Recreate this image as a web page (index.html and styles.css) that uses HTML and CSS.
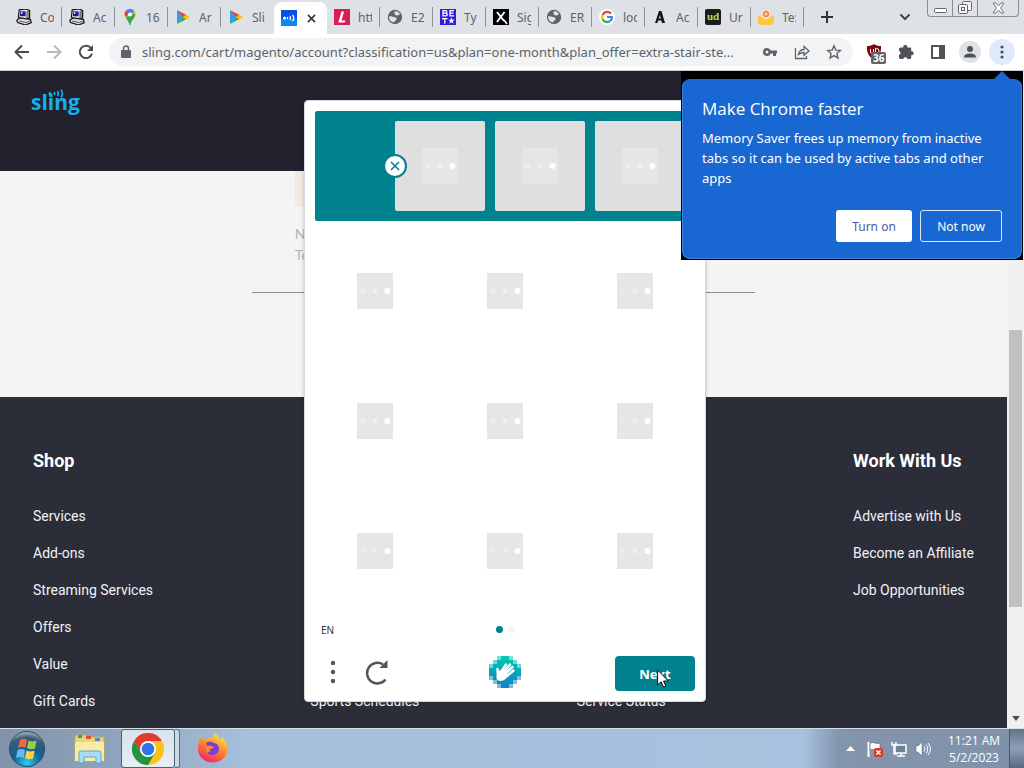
FILE: index.html
```html
<!DOCTYPE html>
<html lang="en">
<head>
<meta charset="utf-8">
<title>Sling</title>
<link rel="stylesheet" href="styles.css">
</head>
<body>
<svg class="defs" width="0" height="0" aria-hidden="true">
  <defs>
    <symbol id="pc" viewBox="0 0 20 20">
      <path d="M4 1l9-1 4 2v9l-3 2H6l-3-3z" fill="#e4e4e4" stroke="#111" stroke-width="1.500"/>
      <path d="M5 3h7v6H5z" fill="#1a1a9a"/><path d="M6 4h2v2H6z" fill="#fff"/>
      <path d="M13 3l3-1v9l-3 1z" fill="#777"/>
      <path d="M1 14l4-3 13 2 1 4-7 3-10-3z" fill="#ddd" stroke="#111" stroke-width="1.500"/>
      <path d="M4 15l9 2 4-2" stroke="#333" fill="none"/>
    </symbol>
    <symbol id="play" viewBox="0 0 16 16">
      <path d="M2 1l6 7-6 7z" fill="#2a9df4"/>
      <path d="M2 1l9.500 5L8 8.500 2 1z" fill="#ea4335"/><path d="M2 15l9.500-5L8 8z" fill="#34a853"/>
      <path d="M11 5.500L15 8l-4 2.500L8 8z" fill="#fbbc04"/>
    </symbol>
    <symbol id="globe" viewBox="0 0 16 16">
      <circle cx="8" cy="8" r="7.200" fill="#5f6368"/>
      <path d="M7.500 2.500c2-1 5 .5 5.500 3-1.500 0-2 1.500-3.500 1S7 5 7.500 2.500zM2 7.500c2-.5 3 .5 5 .5s3 1 2.500 2.500-2 1-2.500 3C4 13 2 11 2 7.500z" fill="#dfe1e5"/>
    </symbol>
    <symbol id="tile" viewBox="0 0 36 36">
      <rect width="36" height="36" fill="#e6e6e6"/>
      <circle cx="6" cy="18" r="2.500" fill="#ededed"/><circle cx="18" cy="18" r="2.500" fill="#efefef"/><circle cx="30.500" cy="18" r="3" fill="#fff"/>
    </symbol>
  </defs>
</svg>

<header class="tabstrip">
  <nav class="tabs" aria-label="Tabs">
    <button class="tab"><svg class="fav"><use href="#pc"/></svg><span>Co</span></button>
    <button class="tab"><svg class="fav"><use href="#pc"/></svg><span>Ac</span></button>
    <button class="tab"><svg class="fav" viewBox="0 0 16 16"><path d="M8 0a5.500 5.500 0 0 0-4.500 2L8 6z" fill="#4285f4"/><path d="M3.500 2C2 4 2.500 6.500 3.500 8L8 5z" fill="#ea4335"/><path d="M3.500 8L8 5l4-3.500C14 4 13.600 7 12 9l-2 3z" fill="#fbbc04"/><path d="M13.200 4c.6 5-4 6-4.700 12h-1C7 13 5 11 3.500 8L8 7z" fill="#34a853"/><path d="M8 0c2 0 3.500.7 4.500 2L8 6z" fill="#4285f4"/><circle cx="8" cy="5.500" r="2" fill="#fff"/></svg><span>16</span></button>
    <button class="tab"><svg class="fav"><use href="#play"/></svg><span>Ar</span></button>
    <button class="tab last"><svg class="fav"><use href="#play"/></svg><span>Sli</span></button>
    <button class="tab active" aria-label="Sling"><svg class="fav" viewBox="0 0 16 16"><rect width="16" height="16" fill="#0a4fe8"/><path d="M0 9h16v7H0z" fill="#0a8bf2"/><circle cx="3.500" cy="8" r="1.500" fill="#fff"/><path d="M6.500 7v2M9 6.200q1 1.800 0 3.600M11.500 5q2.500 3 0 6" stroke="#fff" stroke-width="1.400" fill="none"/></svg><svg class="close" viewBox="0 0 10 10"><path d="M1 1l8 8M9 1L1 9" stroke="#333" stroke-width="1.700"/></svg></button>
    <button class="tab"><svg class="fav" viewBox="0 0 16 16"><rect width="16" height="16" fill="#d81e56"/><path d="M7.500 2.500h2.600L7.500 11.500h4l-.8 2H4.300z" fill="#fff"/></svg><span>htt</span></button>
    <button class="tab"><svg class="fav"><use href="#globe"/></svg><span>E2</span></button>
    <button class="tab"><svg class="fav" viewBox="0 0 16 16"><rect width="16" height="16" fill="#2b1fe0"/><path d="M3 1.700h2.500q1.300 0 1.300 1.200T5.500 4.200H3zM3 4.200h3q1.200 0 1.200 1.300T6 6.800H3zM9.500 1.700h4.500M9.500 4.200h4M9.500 6.800h4.500M10 1v6M2 9.700h5.500M4.800 9.700v5" stroke="#fff" stroke-width="1.300" fill="none"/><path d="M11.500 8.500l.9 2.300h2.300l-1.900 1.400.8 2.500-2.100-1.500-2.100 1.500.8-2.500-1.900-1.400h2.300z" fill="#fff"/></svg><span>Ty</span></button>
    <button class="tab"><svg class="fav" viewBox="0 0 16 16"><rect width="16" height="16" fill="#000"/><path d="M4 3l7 9M11.500 3L4 13" stroke="#fff" stroke-width="2"/><path d="M11 11l3 4" stroke="#fff" stroke-width="1.500"/></svg><span>Sig</span></button>
    <button class="tab"><svg class="fav"><use href="#globe"/></svg><span>ER</span></button>
    <button class="tab"><svg class="fav" viewBox="0 0 16 16"><circle cx="8" cy="8" r="8" fill="#fff"/><g fill="none" stroke-width="2.200"><path d="M12 4.500A5 5 0 0 0 3.600 6" stroke="#ea4335"/><path d="M3.600 6a5 5 0 0 0 0 4.200" stroke="#fbbc04"/><path d="M3.600 10.200a5 5 0 0 0 7.700 1.700" stroke="#34a853"/><path d="M11.300 11.900A5 5 0 0 0 13 8H8" stroke="#4285f4"/></g></svg><span>loc</span></button>
    <button class="tab"><svg class="fav" viewBox="0 0 16 16"><path d="M7 2h2.500L13 14h-3l-.7-2.500H6L5.500 14H3zM8 6l-1.200 3.600h2z" fill="#151515" fill-rule="evenodd"/></svg><span>Ac</span></button>
    <button class="tab"><span class="fav ud">ud</span><span>Ur</span></button>
    <button class="tab"><svg class="fav" viewBox="0 0 16 16"><path d="M3 1h10v9H3z" fill="#fbd9c0"/><circle cx="8" cy="5" r="2.300" fill="none" stroke="#e0703c" stroke-width="1.300"/><path d="M0 6l8 5 8-5v8l-2 2H2l-2-2z" fill="#fbc93d"/></svg><span>Te:</span></button>
  </nav>
  <button class="newtab" aria-label="New tab"><svg width="12" height="12" viewBox="0 0 12 12"><path d="M6 0v12M0 6h12" stroke="#333" stroke-width="2"/></svg></button>
  <button class="chev" aria-label="Search tabs"><svg width="12" height="8" viewBox="0 0 12 8"><path d="M1.500 1.500L6 6l4.500-4.500" stroke="#444" stroke-width="2" fill="none"/></svg></button>
  <div class="winctl">
    <button aria-label="Minimize"><svg width="13" height="6" viewBox="0 0 13 6"><rect x=".5" y=".5" width="12" height="4" rx="1" fill="#fff" stroke="#666"/></svg></button>
    <button aria-label="Restore"><svg width="14" height="14" viewBox="0 0 14 14"><g fill="#f4f4f4" stroke="#666"><rect x="4.500" y=".5" width="9" height="9" rx="1"/><rect x=".5" y="3.500" width="9" height="9" rx="1"/><rect x="3.500" y="6.500" width="3" height="3"/></g></svg></button>
    <button aria-label="Close"><svg width="13" height="12" viewBox="0 0 13 12"><path d="M1 1h3l2.500 3L9 1h3L8.500 6 12 11H9L6.500 8 4 11H1l3.500-5z" fill="#fff" stroke="#777"/></svg></button>
  </div>
</header>

<div class="toolbar">
  <div class="navbtns">
    <button aria-label="Back"><svg width="16" height="16" viewBox="0 0 16 16"><path d="M15 8H2M8 1.500L1.500 8 8 14.500" stroke="#494c50" stroke-width="2" fill="none"/></svg></button>
    <button aria-label="Forward"><svg width="16" height="16" viewBox="0 0 16 16"><path d="M1 8h13M8 1.500L14.500 8 8 14.500" stroke="#b9bbbe" stroke-width="2" fill="none"/></svg></button>
    <button aria-label="Reload"><svg width="16" height="16" viewBox="0 0 16 16"><path d="M13 4.200A6.200 6.200 0 1 0 14 9.500" stroke="#494c50" stroke-width="2" fill="none"/><path d="M15 1v6H9z" fill="#494c50"/></svg></button>
  </div>
  <div class="omnibox">
    <svg width="10" height="14" viewBox="0 0 10 14"><rect y="5" width="10" height="8" rx="1" fill="#5f6368"/><path d="M2.500 6V3.500a2.500 2.500 0 0 1 5 0V6" stroke="#5f6368" stroke-width="1.500" fill="none"/></svg>
    <input class="url" aria-label="Address" value="sling.com/cart/magento/account?classification=us&amp;plan=one-month&amp;plan_offer=extra-stair-ste...">
    <button aria-label="Passwords"><svg width="16" height="16" viewBox="0 0 16 16"><path d="M5 4a4 4 0 1 0 3.700 5.500H11V12h3V9.500h1v-3H8.700A4 4 0 0 0 5 4zm0 2.500a1.500 1.500 0 1 1 0 3 1.500 1.500 0 0 1 0-3z" fill="#5f6368" fill-rule="evenodd"/></svg></button>
    <button aria-label="Share"><svg width="16" height="16" viewBox="0 0 16 16"><path d="M1.500 4v10.500h11V12M4.500 10.500c.5-3.500 2.500-5 5.500-5V2.500L15 7l-5 4.300V8.500c-2.500 0-4 .5-5.500 2z" stroke="#5f6368" stroke-width="1.300" fill="none"/></svg></button>
    <button aria-label="Bookmark"><svg width="16" height="16" viewBox="0 0 16 16"><path d="M8 1.800l1.800 4.300 4.600.4-3.500 3 1 4.500L8 11.600 4.100 14l1-4.500-3.500-3 4.600-.4z" stroke="#5f6368" stroke-width="1.400" fill="none"/></svg></button>
  </div>
  <div class="exts">
    <button class="ublock" aria-label="uBlock"><svg width="16" height="16" viewBox="0 0 16 16"><path d="M8 0c2 1.500 4 2 7 2 .3 6-1 10-7 14C2 12 .7 8 1 2c3 0 5-.5 7-2z" fill="#800610"/><path d="M4.500 5v3q0 1.500 1.500 1.500T7.500 8V5M9.500 9.500v-5h1a2 2 0 0 1 0 5z" stroke="#fff" fill="none"/></svg><span class="badge">36</span></button>
    <button aria-label="Extensions"><svg width="16" height="16" viewBox="0 0 16 16"><path d="M1 5q0-1.500 1.500-1.500H5.300a2 2 0 1 1 3.900 0H12q1.200 0 1.200 1.300v2.500a2 2 0 1 1 0 3.900v2.600q0 1.200-1.200 1.200H9.500a2.200 2.200 0 0 0-4.300 0H2.500Q1 15 1 13.600V11a2.200 2.200 0 0 0 0-4.200z" fill="#4f5256"/></svg></button>
    <button aria-label="Side panel"><svg width="16" height="16" viewBox="0 0 16 16"><rect x="2" y="2" width="12" height="12" fill="none" stroke="#4f5256" stroke-width="2"/><rect x="9" y="2" width="5" height="12" fill="#4f5256"/></svg></button>
    <button class="round avatar" aria-label="Profile"><svg width="14" height="14" viewBox="0 0 14 14"><circle cx="7" cy="4" r="3" fill="#4a5060"/><path d="M1 12.500q0-4 6-4t6 4z" fill="#4a5060"/></svg></button>
    <button class="round menu" aria-label="Menu"><svg width="4" height="14" viewBox="0 0 4 14"><g fill="#41506a"><circle cx="2" cy="2" r="1.600"/><circle cx="2" cy="7" r="1.600"/><circle cx="2" cy="12" r="1.600"/></g></svg></button>
  </div>
</div>

<div class="viewport">
  <div class="page">
    <div class="sitehead">
      <a class="logo" href="#" aria-label="sling">sling<svg class="waves" width="18" height="9" viewBox="0 0 18 9"><circle cx="3" cy="4.500" r="1.500"/><path d="M7.500 3v3M10.500 2q1.500 2.500 0 5M14 .8q3 3.700 0 7.400" fill="none" stroke="#17aef0" stroke-width="1.600"/></svg></a>
    </div>
    <main class="content">
      <section class="notice">
        <div class="blush"></div>
        <p>N<br>Te</p>
      </section>
    </main>
    <footer class="foot">
      <div class="col">
        <h2>Shop</h2>
        <a href="#">Services</a><a href="#">Add-ons</a><a href="#">Streaming Services</a><a href="#">Offers</a><a href="#">Value</a><a href="#">Gift Cards</a>
      </div>
      <div class="col end"><a href="#">Sports Schedules</a></div>
      <div class="col end"><a href="#">Service Status</a></div>
      <div class="col">
        <h2>Work With Us</h2>
        <a href="#">Advertise with Us</a><a href="#">Become an Affiliate</a><a href="#">Job Opportunities</a>
      </div>
    </footer>
    <div class="overlay">
      <div class="captcha" role="dialog" aria-label="Challenge">
        <div class="prompt">
          <div class="sample"><svg class="dots"><use href="#tile"/></svg>
            <button class="dismiss" aria-label="Dismiss"><svg width="10" height="10" viewBox="0 0 10 10"><path d="M1 1l8 8M9 1L1 9" stroke="#00838f" stroke-width="1.600"/></svg></button>
          </div>
          <div class="sample"><svg class="dots"><use href="#tile"/></svg></div>
          <div class="sample"><svg class="dots"><use href="#tile"/></svg></div>
        </div>
        <div class="grid">
          <button aria-label="Image 1"><svg><use href="#tile"/></svg></button>
          <button aria-label="Image 2"><svg><use href="#tile"/></svg></button>
          <button aria-label="Image 3"><svg><use href="#tile"/></svg></button>
          <button aria-label="Image 4"><svg><use href="#tile"/></svg></button>
          <button aria-label="Image 5"><svg><use href="#tile"/></svg></button>
          <button aria-label="Image 6"><svg><use href="#tile"/></svg></button>
          <button aria-label="Image 7"><svg><use href="#tile"/></svg></button>
          <button aria-label="Image 8"><svg><use href="#tile"/></svg></button>
          <button aria-label="Image 9"><svg><use href="#tile"/></svg></button>
        </div>
        <div class="status"><button class="lang">EN</button><div class="crumbs"><i class="on"></i><i></i></div><span></span></div>
        <div class="actions">
          <div class="tools">
            <button aria-label="More"><svg width="6" height="24" viewBox="0 0 6 24"><g fill="#555"><circle cx="3" cy="3" r="2.200"/><circle cx="3" cy="12" r="2.200"/><circle cx="3" cy="21" r="2.200"/></g></svg></button>
            <button aria-label="Refresh"><svg width="24" height="26" viewBox="0 0 24 26"><path d="M18 5.500A10.300 10.300 0 1 0 20.500 20.500" fill="none" stroke="#555" stroke-width="2.500"/><path d="M22.500 1v8H14.500z" fill="#555"/></svg></button>
          </div>
          <svg width="32" height="32" viewBox="0 0 32 32">
            <defs><linearGradient id="hg" x1="0" y1="0" x2="0" y2="1"><stop offset="0" stop-color="#00ccb0"/><stop offset=".5" stop-color="#04a3b8"/><stop offset="1" stop-color="#1880c8"/></linearGradient></defs>
            <path d="M8 0h16v4h4v4h4v16h-4v4h-4v4H8v-4H4v-4H0V8h4V4h4z" fill="url(#hg)"/>
            <g fill="#fff" fill-opacity=".45"><path d="M8 0h4v4H8zM20 0h4v4h-4zM4 4h4v4H4zM24 4h4v4h-4zM0 8h4v4H0zM28 8h4v4h-4zM0 20h4v4H0zM28 20h4v4h-4zM4 24h4v4H4zM24 24h4v4h-4zM8 28h4v4H8zM20 28h4v4h-4z"/></g>
            <g stroke="#fff" stroke-width="2.500" stroke-linecap="round" fill="none"><path d="M12 16l5-7.500M14 17l7-8.500M16 18l7.500-7M18 20l6.500-5.500M9 20l-.5-7"/></g>
            <path d="M8 18l3-4 3 1 4 2 1 3q-3 4.500-7 5-5 0-4.500-4z" fill="#fff"/>
          </svg>
          <button class="next">Next</button>
        </div>
        <svg class="cursor" width="12" height="19" viewBox="0 0 12 19"><path d="M.6 1v15l3.500-3.300L6.500 18l2.300-1-2.300-5h4.800z" fill="#fff" stroke="#111"/></svg>
      </div>
    </div>
  </div>
  <div class="scroll"><div class="thumb"></div><svg width="8" height="5" viewBox="0 0 8 5"><path d="M0 0h8L4 5z" fill="#505050"/></svg></div>
  <aside class="promo">
    <div class="bubble">
      <h1>Make Chrome faster</h1>
      <p>Memory Saver frees up memory from inactive tabs so it can be used by active tabs and other apps</p>
      <div class="choices"><button class="yes">Turn on</button><button class="no">Not now</button></div>
    </div>
  </aside>
</div>

<div class="taskbar">
  <button class="orb" aria-label="Start"><svg width="38" height="38" viewBox="0 0 38 38"><defs><radialGradient id="og" cx=".5" cy=".9" r=".9"><stop offset="0" stop-color="#25d0f5"/><stop offset=".45" stop-color="#14608f"/><stop offset=".8" stop-color="#3c5a76"/><stop offset="1" stop-color="#a9bccb"/></radialGradient></defs><circle cx="19" cy="19" r="17.500" fill="url(#og)" stroke="#2b4866"/><path d="M12 10q4-2.500 7 0l-1.500 8q-3-2-7.500 0z" fill="#ee6a3a"/><path d="M20.500 10.500q3.500 2 8 0l-1.500 8q-4 1.500-8-.3z" fill="#9bcf47"/><path d="M9.500 20q4.500-2 7.500 0l-1.500 8q-3-2-7.500 0z" fill="#6bb8ee"/><path d="M18.600 20.500q3.500 2 8 0l-1.500 8q-4 1.500-8-.3z" fill="#fbd24a"/></svg></button>
  <button class="app explorer" aria-label="Explorer"><svg width="34" height="32" viewBox="0 0 34 32"><path d="M2 4q0-2 2-2h8l2 2h17v24H2z" fill="#e9d27c" stroke="#c8ac52"/><path d="M5 2h4v3H5z" fill="#3aa34a"/><path d="M13 3h5v3h-5z" fill="#d8532e"/><path d="M22 5h5v3h-5z" fill="#4b8fd0"/><path d="M2 9h29v19H2z" fill="#f8eba8"/><path d="M6 30V20q0-2 2-2h18q2 0 2 2v10h-5v-6H11v6z" fill="#a9dcf3" stroke="#5ba7cf"/></svg></button>
  <button class="app chrome" aria-label="Chrome"><svg width="32" height="32" viewBox="0 0 32 32"><circle cx="16" cy="16" r="16" fill="#fbc116"/><path d="M2.140 8A16 16 0 0 1 29.860 8H16L9 20z" fill="#e33b2e"/><path d="M2.140 8A16 16 0 0 0 16 32L23 20 16 22 9 20z" fill="#229342"/><circle cx="16" cy="16" r="8" fill="#fff"/><circle cx="16" cy="16" r="6.300" fill="#2f74e8"/></svg></button>
  <div class="stack"></div>
  <button class="app firefox" aria-label="Firefox"><svg width="32" height="32" viewBox="0 0 32 32"><defs><linearGradient id="fg" x1=".8" y1="0" x2=".3" y2="1"><stop offset="0" stop-color="#fff04a"/><stop offset=".45" stop-color="#ff9328"/><stop offset="1" stop-color="#f0246a"/></linearGradient></defs><path d="M18 0q4 3 5 7l2-3q6 7 5.500 14A15 14 0 0 1 1 18Q0 10 5 3q1 3 3 4 4-3 8-2 0-3 2-5z" fill="url(#fg)"/><path d="M9 10q4-3 8 0 5 1 5 6a6.500 6.500 0 0 1-12 3q2 1 4-1-3-2-5-8z" fill="#7440d8"/><path d="M9 13q4-1 8 1-1 2-4 2-2 1-2 4-3-2-2-7z" fill="#ff8b2d"/></svg></button>
  <div class="tray">
    <svg width="9" height="5" viewBox="0 0 9 5"><path d="M4.500 0L9 5H0z" fill="#fff"/></svg>
    <svg width="16" height="16" viewBox="0 0 16 16"><path d="M1.500 1v15" stroke="#fff" stroke-width="2"/><path d="M3 2q3-1 5 0t5 0v7q-3 1-5 0t-5 0z" fill="#fff" stroke="#555" stroke-width=".6"/><rect x="7" y="7" width="9" height="9" rx="2" fill="#d8392b"/><path d="M9.500 9.500l4 4M13.500 9.500l-4 4" stroke="#fff" stroke-width="1.600"/></svg>
    <svg width="16" height="16" viewBox="0 0 16 16"><rect x="4" y="4" width="11" height="8" fill="#6f8195" stroke="#fff" stroke-width="1.500"/><path d="M6 15h8M10 12v3M1 1v3h4V1M3 4v9h3" stroke="#fff" stroke-width="1.500" fill="none"/></svg>
    <svg width="16" height="16" viewBox="0 0 16 16"><path d="M1 5h2l4-4v14l-4-4H1z" fill="#fff" stroke="#667" stroke-width=".5"/><path d="M9 5.500q2 2.500 0 5M11 3.500q3.500 4.500 0 9M13 2q5 6 0 12" stroke="#fff" fill="none"/></svg>
    <div class="clock">11:21 AM<br>5/2/2023</div>
  </div>
  <button class="peek" aria-label="Show desktop"></button>
</div>
</body>
</html>
```

FILE: styles.css
```css
* { box-sizing: border-box; }
body {
  margin: 0;
  height: 100vh;
  display: flex;
  flex-direction: column;
  overflow: hidden;
  font-family: "Noto Sans", "Open Sans", sans-serif;
}
button { border: 0; padding: 0; margin: 0; background: none; font: inherit; color: inherit; }
svg { display: block; flex: none; }
.defs { position: absolute; }

/* Tab strip */
.tabstrip { display: flex; align-items: center; height: 34px; padding-left: 9px; background: #dee1e6; flex: none; }
.tabs { display: flex; align-self: stretch; align-items: center; }
.tab { width: 53px; height: 20px; padding-left: 7px; display: flex; align-items: center; gap: 8px; border-right: 1px solid #8f9297; font-size: 12px; color: #5f6368; }
.tab span:last-child { width: 14px; overflow: hidden; text-align: left; white-space: nowrap; }
.tab.last { border-color: transparent; }
.tab.active { height: 32px; align-self: flex-end; gap: 10px; border: 0; border-radius: 8px 8px 0 0; background: #fff; }
.fav { width: 16px; height: 16px; flex: none; }
.ud { border-radius: 2px; background: #1b1c1b; color: #b6e05a; font: bold 11px/15px "Liberation Serif", serif; text-align: center; }
.close { width: 9px; height: 9px; }
.newtab { margin-left: 17px; }
.chev { margin-left: auto; }
.winctl { display: flex; align-self: flex-start; height: 17px; margin: 0 5px 0 16px; border: 1px solid #8a8d92; border-top: 0; border-radius: 0 0 4px 4px; }
.winctl button { width: 25px; display: flex; align-items: center; justify-content: center; border-right: 1px solid #8a8d92; }
.winctl button:first-child { align-items: flex-end; padding-bottom: 2px; }
.winctl button:last-child { width: 40px; border: 0; }

/* Toolbar */
.toolbar { display: flex; align-items: center; height: 37px; padding: 0 14px; background: #fff; border-bottom: 1px solid #c9cccf; flex: none; }
.navbtns { display: flex; gap: 16px; }
.omnibox { flex: 1; height: 28px; margin: 0 13px 0 15px; padding: 0 11px 0 12px; display: flex; align-items: center; gap: 16px; border-radius: 14px; background: #f1f3f4; }
.url { flex: 1; min-width: 0; margin-left: -5px; padding: 0; border: 0; outline: 0; font: 13px/20px "Noto Sans", sans-serif; color: #5f6368; background: #f1f3f4; }
.exts { display: flex; align-items: center; gap: 16px; }
.ublock { position: relative; }
.badge { position: absolute; left: 5px; top: 8px; padding: 0 2px; border-radius: 2px; background: #5f6368; color: #fff; font: bold 10px/12px "Open Sans", sans-serif; }
.round { display: flex; align-items: center; justify-content: center; border-radius: 50%; }
.avatar { width: 22px; height: 22px; margin: 0 -3px; background: #dfe1e5; }
.menu { width: 26px; height: 26px; margin: 0 -5px; background: #dfebfc; }

/* Web page */
.viewport { position: relative; flex: 1; min-height: 0; display: flex; }
.page { position: relative; flex: 1; display: flex; flex-direction: column; overflow: hidden; background: #2b2d39; }
.sitehead { height: 100px; padding: 15px 31px; background: #22212d; flex: none; }
.logo { position: relative; display: inline-block; color: #17aef0; font: bold 21px/32px "Open Sans", sans-serif; text-decoration: none; }
.waves { position: absolute; left: 16px; top: 3px; fill: #17aef0; }
.content { height: 226px; background: #f4f4f4; flex: none; }
.notice { width: 50%; height: 122px; margin: 0 auto; padding-left: 43px; border-bottom: 1px solid #8c8c8c; }
.blush { width: 36px; height: 36px; background: #f3e8e4; }
.notice p { margin: 16px 0 0; color: #b4b4b4; font: 14px/21px Lato, sans-serif; }
.foot { display: grid; grid-template-columns: 278fr 267fr 277fr 119fr; padding: 53px 33px 0; color: #f2f2f4; font: 14px/20px Roboto, sans-serif; }
.col { display: flex; flex-direction: column; gap: 17px; white-space: nowrap; }
.end { align-self: end; }
.foot h2 { margin: 0 0 17px; font: bold 18px/22px Roboto, sans-serif; color: #fff; }
.foot a { color: inherit; text-decoration: none; }

/* Challenge dialog */
.overlay { position: absolute; inset: 29px 0 auto 3px; display: flex; justify-content: center; }
.captcha { position: relative; width: 402px; padding: 10px; border: 1px solid #d7d7d7; border-radius: 4px; background: #fff; box-shadow: 0 0 4px rgba(0, 0, 0, .2); }
.prompt { display: flex; justify-content: flex-end; gap: 10px; padding: 10px; border-radius: 2px; background: #00838f; }
.sample { position: relative; width: 90px; height: 90px; display: flex; align-items: center; justify-content: center; border-radius: 2px; background: #dfdfdf; }
.dots { width: 36px; height: 36px; }
.dismiss { position: absolute; left: -12px; top: 33px; width: 24px; height: 24px; display: flex; align-items: center; justify-content: center; border: 2px solid #00838f; border-radius: 50%; background: #fff; }
.grid { display: grid; grid-template-columns: repeat(3, 1fr); gap: 10px; margin-top: 10px; }
.grid button { height: 120px; display: flex; align-items: center; justify-content: center; }
.grid svg { width: 36px; height: 36px; }
.status { display: grid; grid-template-columns: 1fr auto 1fr; align-items: center; height: 37px; padding: 0 6px; }
.lang { justify-self: start; font-size: 10px; color: #333; }
.crumbs { display: flex; gap: 5px; }
.crumbs i { width: 7px; height: 7px; border-radius: 50%; background: #f5f5f5; }
.crumbs .on { background: #00838f; }
.actions { display: grid; grid-template-columns: 1fr auto 1fr; align-items: start; margin-top: 8px; }
.tools { display: flex; align-items: center; gap: 29px; height: 32px; padding-left: 15px; }
.next { justify-self: end; width: 80px; height: 35px; border-radius: 4px; background: #00838f; color: #fff; font: bold 13px/20px "Open Sans", sans-serif; }
.cursor { position: absolute; right: 36px; bottom: 13px; }

.scroll { width: 17px; padding-bottom: 7px; display: flex; flex-direction: column; align-items: center; background: #f0f0f0; }
.thumb { width: 13px; height: 277px; margin: 259px 0 auto; background: #c0c0c0; }

/* Promo bubble */
.promo { position: absolute; top: 0; right: 1px; width: 342px; padding: 8px 1px 1px; background: #000; }
.promo::before { content: ""; position: absolute; right: 13px; top: 0; border: 8px solid transparent; border-top: 0; border-bottom-color: #1967d2; }
.bubble { padding: 17px 19px 16px; border: 1px solid #3f82dd; border-top-color: #1967d2; border-radius: 8px; background: #1967d2; color: #fff; }
.bubble h1 { margin: 0; font: 17px/24px "Open Sans", sans-serif; }
.bubble p { margin: 7px 0 0; font-size: 13px; line-height: 20px; }
.choices { display: flex; justify-content: flex-end; gap: 8px; margin-top: 22px; font-size: 12px; }
.choices button { height: 32px; border-radius: 3px; }
.yes { width: 76px; background: #fff; color: #4a5aa0; }
.no { width: 82px; border: 1px solid #dbe7f9; }

/* Taskbar */
.taskbar { display: flex; align-items: center; height: 40px; flex: none; border-top: 1px solid #d5dfe9; background: linear-gradient(to right, #8193aa, #8fa4bd 120px, #a7c0dc 250px, #a7c1de calc(100% - 220px), #8295ad calc(100% - 185px), #7f92a9); }
.orb { margin-left: 8px; }
.app { height: 39px; display: flex; align-items: center; justify-content: center; }
.explorer { width: 60px; margin: 0 1px 0 14px; }
.chrome { width: 54px; border: 1px solid #4f6073; border-radius: 3px; background: linear-gradient(#d8e2ed, #e6edf4); }
.stack { width: 5px; height: 39px; border: 1px solid #5d6f84; border-left: 0; border-radius: 0 3px 3px 0; background: #cbd8e6; }
.firefox { width: 66px; }
.tray { margin-left: auto; display: flex; align-items: center; gap: 8px; color: #fff; }
.tray > svg:first-child { margin-right: 4px; }
.clock { width: 70px; font: 12px/17px "Open Sans", sans-serif; text-align: center; }
.peek { width: 15px; align-self: stretch; border-left: 1px solid #48586b; background: linear-gradient(#62748a, #8ea0b5 50%, #586a80); }
```
